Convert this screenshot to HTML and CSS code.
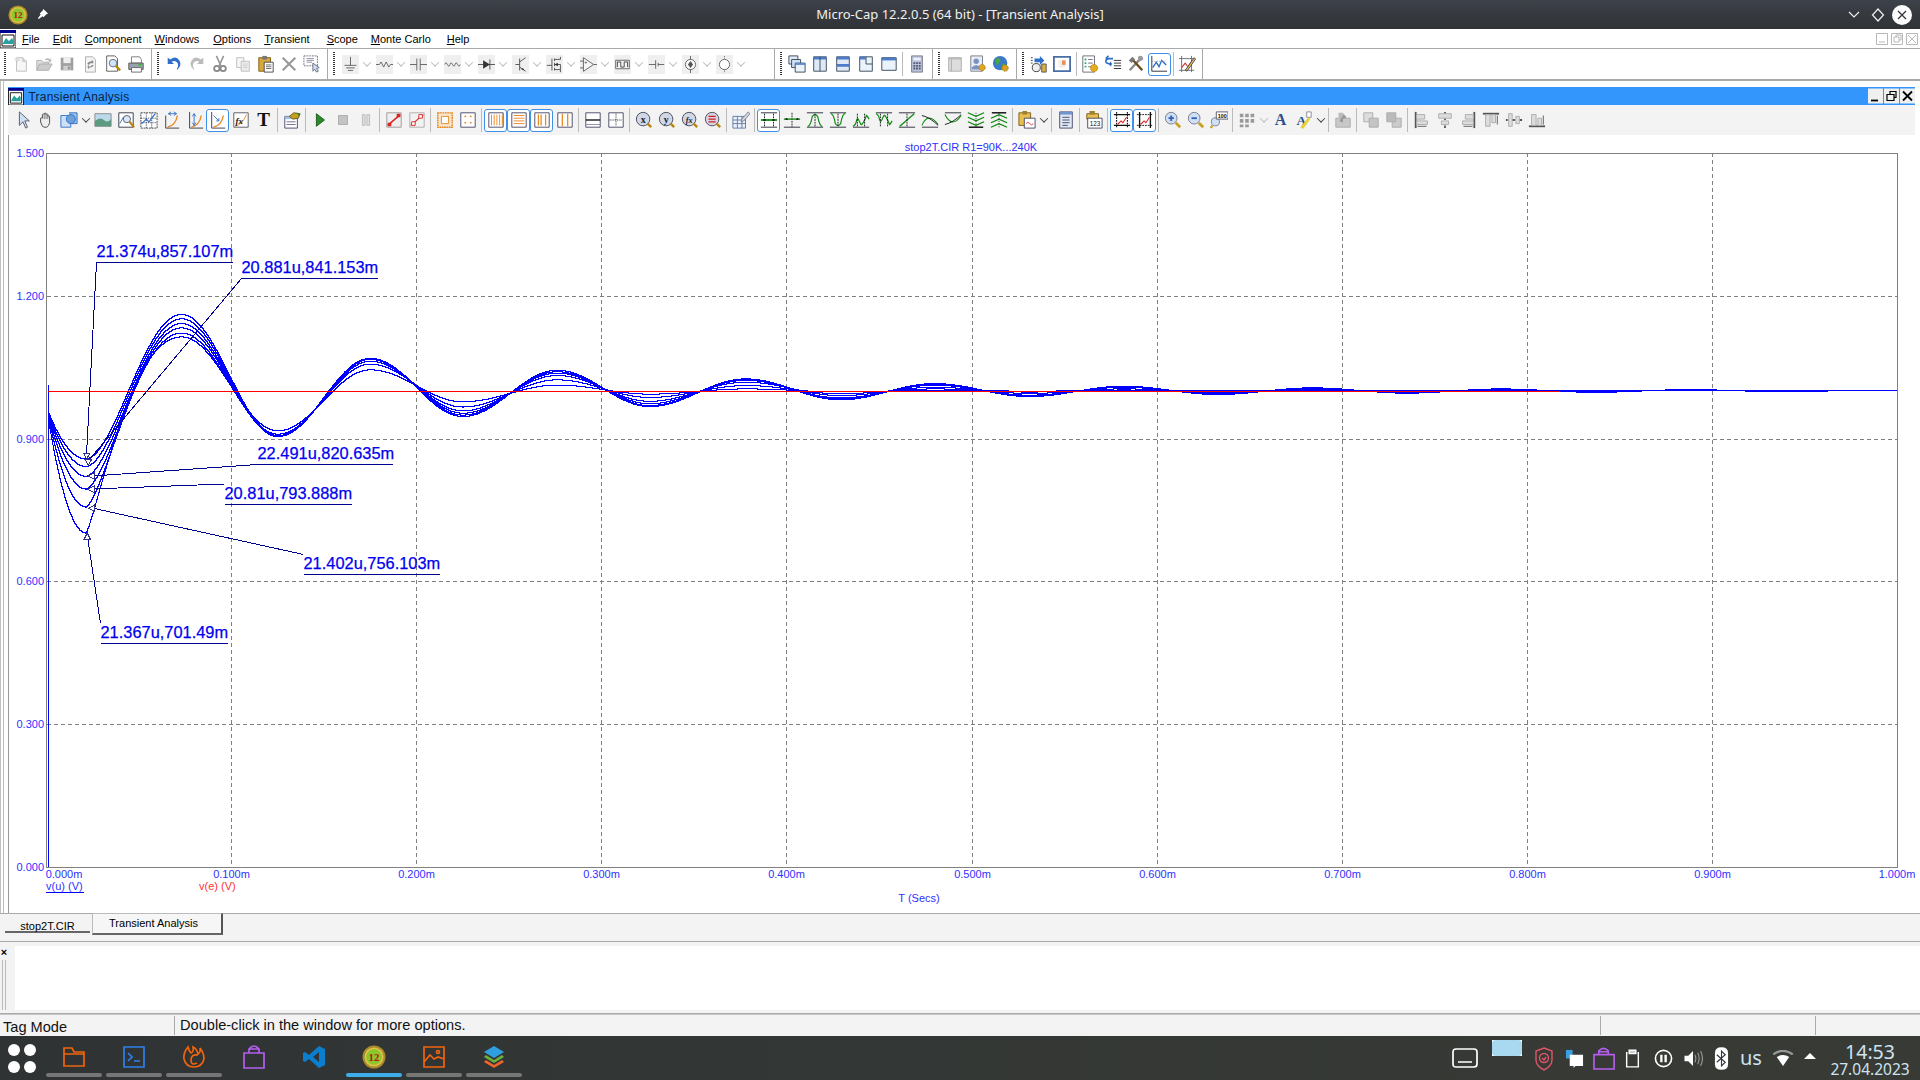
FILE: index.html
```html
<!DOCTYPE html>
<html lang="en">
<head>
<meta charset="utf-8">
<title>Micro-Cap 12.2.0.5 (64 bit) - [Transient Analysis]</title>
<link rel="stylesheet" href="styles.css">
</head>
<body>
<svg class="defs" width="0" height="0">
<defs>
<symbol id="mc" viewBox="0 0 20 20"><circle cx="10" cy="10" r="9.6" fill="#a98a2a"/><circle cx="10" cy="10" r="8" fill="#e0c04a"/><circle cx="10" cy="10" r="6.6" fill="#8cc82c"/><text x="10" y="13.4" class="mct">12</text></symbol>
<symbol id="new" viewBox="0 0 20 20"><path d="M5 3h7l4 4v11H5z" fill="#f6f6f6" stroke="#bbb"/><path d="M12 3v4h4" fill="#ddd" stroke="#bbb"/><path d="M2 3l3 1 1-3 1 3 3-1-2 2 2 2-3-1-1 3-1-3-3 1 2-2z" fill="#ddd"/></symbol>
<symbol id="open" viewBox="0 0 20 20"><path d="M2 17V6h5l2 2h6v2" fill="#ddd" stroke="#aaa"/><path d="M2 17l3-7h14l-4 7z" fill="#ccc" stroke="#aaa"/><path d="M11 5q3-3 6 0l1-2v5h-4l2-1q-2-2-4-1z" fill="#bbb"/></symbol>
<symbol id="save" viewBox="0 0 20 20"><path d="M3 3h14v14H3z" fill="#a0a0a0"/><path d="M6 3h8v6H6z" fill="#efefef"/><path d="M6 12h8v5H6z" fill="#d0d0d0"/><path d="M11 13h2v3h-2z" fill="#888"/></symbol>
<symbol id="rel" viewBox="0 0 20 20"><path d="M5 2h8l3 3v14H5z" fill="#f4f4f4" stroke="#aaa"/><path d="M7 10q1-3 5-3v-2l2 3-2 2V9q-3 0-3 2zM14 11q-1 3-5 3v2l-2-3 2-2v2q3 0 3-2z" fill="#888"/></symbol>
<symbol id="prev" viewBox="0 0 20 20"><path d="M3 1h9l3 3v14H3z" fill="#fff" stroke="#555"/><circle cx="10" cy="9" r="4.2" fill="#cfe6fa" stroke="#667"/><path d="M13 12l5 5" stroke="#b8860b" stroke-width="2.6"/></symbol>
<symbol id="print" viewBox="0 0 20 20"><path d="M5 2h9l2 3v4H5z" fill="#fff" stroke="#777"/><path d="M2 9h16v7H2z" fill="#9aa3ad" stroke="#555"/><path d="M5 14h11v5H5z" fill="#fff" stroke="#666"/><path d="M13 10h3v2h-3z" fill="#2c2"/></symbol>
<symbol id="undo" viewBox="0 0 20 20"><path d="M3 3v7h7L7.500 7.500Q11 5 14 9q1.500 3-1 7h1q5-5 2-10Q12 0 6 5z" fill="#2f6fc8"/></symbol>
<symbol id="redo" viewBox="0 0 20 20"><path d="M17 3v7h-7l2.500-2.500Q9 5 6 9q-1.500 3 1 7H6Q1 11 4 6q4-6 10-1z" fill="#bbb"/></symbol>
<symbol id="cut" viewBox="0 0 20 20"><path d="M6 1l5 11M14 1L9 12" stroke="#999" stroke-width="1.800"/><circle cx="6.500" cy="15" r="3" fill="none" stroke="#888" stroke-width="2"/><circle cx="13.500" cy="15" r="3" fill="none" stroke="#888" stroke-width="2"/></symbol>
<symbol id="copy" viewBox="0 0 20 20"><path d="M3 3h8v11H3z" fill="#f6f6f6" stroke="#bbb"/><path d="M8 7h9v11H8z" fill="#eee" stroke="#bbb"/><path d="M10 10h5M10 12h5M10 14h5" stroke="#ccc"/></symbol>
<symbol id="paste" viewBox="0 0 20 20"><path d="M2 3h13v15H2z" fill="#d8a93a" stroke="#7a5a14"/><path d="M6 1h5v4H6z" fill="#777"/><path d="M8 8h10v11H8z" fill="#fff" stroke="#444"/><path d="M10 11h6M10 13h6M10 15h6" stroke="#666"/></symbol>
<symbol id="del" viewBox="0 0 20 20"><path d="M3 3l14 14M17 3L3 17" stroke="#999" stroke-width="2.400"/></symbol>
<symbol id="sel" viewBox="0 0 20 20"><path d="M1 1h15v11H1z" fill="none" stroke="#667" stroke-dasharray="2 1"/><path d="M4 4h8M4 6h8M4 8h6" stroke="#889"/><path d="M11 9l7 5-3 1 2 3-2 1-2-3-2 2z" fill="#cfe0f4" stroke="#667"/></symbol>
<symbol id="gnd" viewBox="0 0 20 20"><path d="M10 1v10M3 11h14M5 14h10M7 17h6" stroke="#555"/></symbol>
<symbol id="res" viewBox="0 0 20 20"><path d="M0 10h4l2-3 3 6 3-6 3 6 2-3h3" fill="none" stroke="#555"/></symbol>
<symbol id="cap" viewBox="0 0 20 20"><path d="M0 10h8M12 10h8M8 3v14M12 3v14" fill="none" stroke="#555"/></symbol>
<symbol id="ind" viewBox="0 0 20 20"><path d="M1 10q1-4 3 0t3 0 3 0 3 0 3 0 3 0" fill="none" stroke="#555"/></symbol>
<symbol id="dio" viewBox="0 0 20 20"><path d="M0 10h20M14 4v12" stroke="#444"/><path d="M6 5l8 5-8 5z" fill="#333"/></symbol>
<symbol id="bjt" viewBox="0 0 20 20"><path d="M4 10h5M9 3v14M9 7l7-5M9 13l7 5" fill="none" stroke="#444"/><path d="M15 17l-4-1 1.500-2z" fill="#333"/></symbol>
<symbol id="mos" viewBox="0 0 20 20"><path d="M1 11h6M7 3v14M10 3v3M10 8v4M10 14v3M10 4h7V1M10 16h7v3M10 10h7v6M17 10" fill="none" stroke="#444"/><path d="M10 10l4-2v4z" fill="#333"/></symbol>
<symbol id="amp" viewBox="0 0 20 20"><path d="M4 2l12 8-12 8zM0 6h4M0 14h4M16 10h4" fill="#f6f6f6" stroke="#555"/><text x="5" y="9" class="mini">+</text></symbol>
<symbol id="pul" viewBox="0 0 20 20"><path d="M2 5h16v10H2z" fill="#f4f4f4" stroke="#555"/><path d="M4 13V7h4v6h4V7h4v6" fill="none" stroke="#333"/></symbol>
<symbol id="bat" viewBox="0 0 20 20"><path d="M1 10h8M12 10h7M9 5v10M12 8v4" fill="none" stroke="#555"/></symbol>
<symbol id="src" viewBox="0 0 20 20"><circle cx="10" cy="10" r="6" fill="#f8f8f8" stroke="#555"/><path d="M10 0v4M10 16v4" stroke="#555"/><path d="M10 6l3 4h-6zM10 14l3-4h-6z" fill="#555"/></symbol>
<symbol id="src2" viewBox="0 0 20 20"><circle cx="10" cy="10" r="6" fill="#fff" stroke="#555"/><path d="M10 0v4M10 16v4" stroke="#555" stroke-dasharray="1 1"/></symbol>
<symbol id="w1" viewBox="0 0 20 20"><path d="M1 1h10v9H1z" fill="#dfe9f6" stroke="#345"/><path d="M4 5h10v9H4z" fill="#cfe0f6" stroke="#345"/><path d="M8 9h11v10H8z" fill="#eaf2fb" stroke="#345"/><path d="M8 9h11v2H8z" fill="#5a8cd0"/></symbol>
<symbol id="w2" viewBox="0 0 20 20"><path d="M3 2h14v16H3z" fill="#dfe9f6" stroke="#345"/><path d="M3 2h14v3H3z" fill="#4a7cc8"/><path d="M10 2v16" stroke="#345"/></symbol>
<symbol id="w3" viewBox="0 0 20 20"><path d="M3 2h14v16H3z" fill="#dfe9f6" stroke="#345"/><path d="M3 2h14v3H3zM3 10h14v3H3z" fill="#4a7cc8"/></symbol>
<symbol id="w4" viewBox="0 0 20 20"><path d="M3 2h14v16H3z" fill="#eaf2fb" stroke="#345"/><path d="M10 2v8h7" fill="none" stroke="#345"/><path d="M3 2h7v3H3z" fill="#4a7cc8"/></symbol>
<symbol id="w5" viewBox="0 0 20 20"><path d="M2 3h16v14H2z" fill="#eaf2fb" stroke="#345"/><path d="M2 3h16v3H2z" fill="#4a7cc8"/></symbol>
<symbol id="calc" viewBox="0 0 20 20"><path d="M4 1h12v18H4z" fill="#b9c4d8" stroke="#778"/><path d="M6 3h8v3H6z" fill="#eef"/><path d="M6 8h2v2H6zM9 8h2v2H9zM12 8h2v2h-2zM6 11h2v2H6zM9 11h2v2H9zM12 11h2v2h-2zM6 14h2v2H6zM9 14h2v2H9zM12 14h2v2h-2z" fill="#557"/></symbol>
<symbol id="pan" viewBox="0 0 20 20"><path d="M3 3h14v15H3z" fill="#ddd" stroke="#aaa"/><path d="M3 3h14v2H3z" fill="#bbb"/><path d="M6 5v13" stroke="#aaa"/></symbol>
<symbol id="ppl" viewBox="0 0 20 20"><path d="M2 1h13v17H2z" fill="#e8eef5" stroke="#778"/><circle cx="8" cy="7" r="3" fill="#7a93c0"/><path d="M3 14q5-6 10 0v2H3z" fill="#7a93c0"/><circle cx="14.500" cy="14" r="3.500" fill="#e0a820" stroke="#a87808" stroke-dasharray="1.500 1"/></symbol>
<symbol id="glb" viewBox="0 0 20 20"><circle cx="9" cy="9" r="8" fill="#3b79c9"/><path d="M4 4q4-1 5 1t-1 4-3 2zM11 10q4-1 4 1t-2 4z" fill="#4aa83c"/><circle cx="14.500" cy="14.500" r="3.500" fill="#d8a420" stroke="#a87808" stroke-dasharray="1.500 1"/></symbol>
<symbol id="runa" viewBox="0 0 20 20"><path d="M1 3h2M1 6h2M1 9h2" stroke="#333"/><path d="M5 4h6V1l5 5-5 5V8H5z" fill="#2f6fc8"/><circle cx="7" cy="14" r="4.500" fill="#eee" stroke="#333"/><path d="M13 10h5v9h-5z" fill="#d8b040" stroke="#555"/></symbol>
<symbol id="wimg" viewBox="0 0 20 20"><path d="M1 2h18v16H1z" fill="#fff" stroke="#4a6ea8" stroke-width="2"/><path d="M6 6h8v8H6z" fill="#eee"/><path d="M10 6h4v5h-4z" fill="#e8905a"/></symbol>
<symbol id="chk" viewBox="0 0 20 20"><path d="M2 1h13v18H2z" fill="#fff" stroke="#667"/><path d="M4 4h2v2H4zM4 8h2v2H4zM4 12h2v2H4z" fill="#3a7"/><path d="M8 5h5M8 9h5M8 13h3" stroke="#667"/><circle cx="14.500" cy="14.500" r="4" fill="#e6ac20" stroke="#a87808" stroke-dasharray="1.500 1"/></symbol>
<symbol id="lst" viewBox="0 0 20 20"><path d="M11 6h8M11 9h8M11 12h8M11 15h8" stroke="#222"/><path d="M2 7q0-3 4-3h4M5 1L2 4M9 10q-7 0-7-3" fill="none" stroke="#2f6fc8" stroke-width="1.800"/><path d="M8 7l-3 3 3 3z" fill="#2f6fc8"/></symbol>
<symbol id="tool" viewBox="0 0 20 20"><path d="M3 17L15 4" stroke="#8a8a8a" stroke-width="2.600"/><path d="M17 17L6 5" stroke="#6b4a20" stroke-width="2.600"/><path d="M2 6l4-4 3 3-4 4z" fill="#777"/><path d="M13 1q5-1 5 4l-3 2-3-3z" fill="#9a9a9a"/></symbol>
<symbol id="cht" viewBox="0 0 20 20"><path d="M2 1v17h17" fill="none" stroke="#223"/><path d="M3 14l4-6 3 5 3-7 5 5" fill="none" stroke="#2f6fc8" stroke-width="1.500"/><path d="M2 7h16" stroke="#999" stroke-dasharray="1 1"/></symbol>
<symbol id="chp" viewBox="0 0 20 20"><path d="M1 4h17M1 17h17M4 1v18M15 1v18" stroke="#667"/><path d="M4 14l4-5 3 4 5-7" fill="none" stroke="#c33" stroke-width="1.200"/><path d="M8 17L18 3l1.500 1.500L10 18z" fill="#e8c040" stroke="#446"/></symbol>
<symbol id="arw" viewBox="0 0 20 20"><path d="M6 1v15l4-4 3 7 2-1-3-7h5z" fill="#cfe0f4" stroke="#556"/></symbol>
<symbol id="hand" viewBox="0 0 20 20"><path d="M6 17Q3 12 4 8q1-1 2 0V4q1-2 2 0V3q1-2 2 0v1q1-2 2 0v2q1-1 2 0v7q-1 4-3 5H8z" fill="#eee" stroke="#444"/><path d="M8 4v5M10 3v6M12 4v5" stroke="#777"/></symbol>
<symbol id="sh" viewBox="0 0 20 20"><path d="M1 5h11v13H1z" fill="#cfe0f4" stroke="#2f6fc8"/><path d="M10 2h9v12h-6" fill="#9cc0e8" stroke="#2f6fc8"/><circle cx="12" cy="9" r="5" fill="#6f9fd8" stroke="#2f6fc8"/></symbol>
<symbol id="img" viewBox="0 0 20 20"><path d="M1 3h18v14H1z" fill="#bcd8ea" stroke="#888"/><path d="M1 11q6-5 10-1t8-1v8H1z" fill="#5c9a82"/></symbol>
<symbol id="zg" viewBox="0 0 20 20"><path d="M2 2h16v16H2z" fill="#fff" stroke="#334"/><path d="M3 14l4-7 3 5" fill="none" stroke="#2f6fc8"/><circle cx="11" cy="9" r="4" fill="#dbe8f6" stroke="#556"/><path d="M14 12l5 6" stroke="#b8860b" stroke-width="2.400"/></symbol>
<symbol id="gg" viewBox="0 0 20 20"><path d="M1 2h18v17H1z" fill="#fff" stroke="#333" stroke-dasharray="2 1"/><path d="M1 8h18M1 13h18M7 2v17M13 2v17" stroke="#334" stroke-dasharray="1 1"/><path d="M2 14l5-5 3 3 7-9" fill="none" stroke="#2f6fc8" stroke-width="1.300"/></symbol>
<symbol id="o1" viewBox="0 0 20 20"><path d="M3 5v14h15" fill="none" stroke="#334"/><path d="M5 18q9-2 11-13" fill="none" stroke="#e8851c" stroke-width="1.500"/><path d="M6 3h9M6 3l3-2M6 3l3 2M15 3l-3-2M15 3l-3 2" stroke="#2f6fc8" fill="none"/></symbol>
<symbol id="o2" viewBox="0 0 20 20"><path d="M4 1v18h15" fill="none" stroke="#334"/><path d="M6 18q9-2 11-13" fill="none" stroke="#e8851c" stroke-width="1.500"/><path d="M9 3v13M9 3L7 6M9 3l2 3M9 16l-2-3M9 16l2-3" stroke="#2f6fc8" fill="none"/></symbol>
<symbol id="o3" viewBox="0 0 20 20"><path d="M3 1v18h15" fill="none" stroke="#334"/><path d="M5 18q9-2 11-13" fill="none" stroke="#e8851c" stroke-width="1.500"/><path d="M5 5l6 6M8 11h3V8" stroke="#2f6fc8" fill="none"/></symbol>
<symbol id="fx" viewBox="0 0 20 20"><path d="M2 2h16v16H2z" fill="#fff" stroke="#556"/><path d="M3 17q9-2 13-13" fill="none" stroke="#e8851c"/><text x="4" y="14" class="fxt">fx</text></symbol>
<symbol id="prop" viewBox="0 0 20 20"><path d="M2 6h14v13H2z" fill="#fff" stroke="#446"/><path d="M2 6h14v3H2z" fill="#9cc0e8"/><path d="M4 12h10M4 15h10" stroke="#668"/><path d="M7 6l5-4 7 1-2 5-6 1z" fill="#c8a020" stroke="#6a5a10"/><path d="M15 2l4 1-1 3z" fill="#2a8a3a"/></symbol>
<symbol id="play" viewBox="0 0 20 20"><path d="M6 3l9 7-9 7z" fill="#2a8a2a" stroke="#1a5a1a"/></symbol>
<symbol id="stp" viewBox="0 0 20 20"><path d="M5 5h10v10H5z" fill="#c4c4c4" stroke="#aaa"/></symbol>
<symbol id="pau" viewBox="0 0 20 20"><path d="M6 4h3v12H6zM11 4h3v12h-3z" fill="#ddd" stroke="#bbb"/></symbol>
<symbol id="r1" viewBox="0 0 20 20"><path d="M2 2h16v16H2z" fill="#eee" stroke="#999"/><path d="M3 16L17 4" stroke="#d22" stroke-width="1.600"/><path d="M3 13h4v4H3zM13 3h4v4h-4z" fill="#d22"/></symbol>
<symbol id="r2" viewBox="0 0 20 20"><path d="M2 2h16v16H2z" fill="#f2f2f2" stroke="#aaa"/><path d="M3 16L17 4" stroke="#d22" stroke-width="1.300"/><path d="M4 12h4v4H4zM12 4h4v4h-4z" fill="#fff" stroke="#d22"/></symbol>
<symbol id="osq" viewBox="0 0 20 20"><path d="M2 2h16v16H2z" fill="#f8e8d0" stroke="#e8851c" stroke-width="1.500" stroke-dasharray="2 .6"/><path d="M6 6h8v8H6z" fill="#fff" stroke="#e8851c"/></symbol>
<symbol id="dgd" viewBox="0 0 20 20"><path d="M2 2h16v16H2z" fill="#fff" stroke="#446"/><path d="M6 6h2M12 6h2M6 13h2M12 13h2M7 5v2M13 5v2M7 12v2M13 12v2" stroke="#e8851c"/></symbol>
<symbol id="l1" viewBox="0 0 20 20"><path d="M2 2h16v16H2z" fill="#fff" stroke="#446"/><path d="M5 4v12M8 4v12M11 4v12M14 4v12M17 4v12" stroke="#e8851c"/></symbol>
<symbol id="l2" viewBox="0 0 20 20"><path d="M2 2h16v16H2z" fill="#fff" stroke="#446"/><path d="M4 5h12M4 8h12M4 11h12M4 14h12" stroke="#e8851c"/></symbol>
<symbol id="l3" viewBox="0 0 20 20"><path d="M2 2h16v16H2z" fill="#fff" stroke="#446"/><path d="M6 4v12M9 4v12M14 4v12" stroke="#e8851c" stroke-width="1.400"/></symbol>
<symbol id="l4" viewBox="0 0 20 20"><path d="M2 2h16v16H2z" fill="#fff" stroke="#446"/><path d="M7 3v14M13 3v14" stroke="#e8851c" stroke-width="1.400"/></symbol>
<symbol id="hl" viewBox="0 0 20 20"><path d="M2 2h16v16H2z" fill="#fff" stroke="#446"/><path d="M2 10h16" stroke="#111" stroke-width="1.500"/><path d="M2 15h16" stroke="#88a"/></symbol>
<symbol id="cr" viewBox="0 0 20 20"><path d="M2 2h16v16H2z" fill="#fff" stroke="#446"/><path d="M10 3v14M3 10h14" stroke="#111" stroke-dasharray="1 1"/></symbol>
<symbol id="zx" viewBox="0 0 20 20"><circle cx="9" cy="9" r="7.500" fill="#cfd8e4" stroke="#445"/><text x="9" y="13" class="zt">x</text><path d="M14 14l4 4" stroke="#b8860b" stroke-width="2.600"/></symbol>
<symbol id="zy" viewBox="0 0 20 20"><circle cx="9" cy="9" r="7.500" fill="#cfd8e4" stroke="#445"/><text x="9" y="13" class="zt">y</text><path d="M14 14l4 4" stroke="#b8860b" stroke-width="2.600"/></symbol>
<symbol id="zf" viewBox="0 0 20 20"><circle cx="9" cy="9" r="7.500" fill="#cfd8e4" stroke="#445"/><text x="9" y="13" class="zts">fx</text><path d="M14 14l4 4" stroke="#b8860b" stroke-width="2.600"/></symbol>
<symbol id="zl" viewBox="0 0 20 20"><circle cx="9" cy="9" r="7.500" fill="#d9d4e4" stroke="#445"/><path d="M5 6h8M5 9h8M5 12h8" stroke="#c22" stroke-width="1.500"/><path d="M14 14l4 4" stroke="#b8860b" stroke-width="2.600"/></symbol>
<symbol id="tbp" viewBox="0 0 20 20"><path d="M1 6h14v13H1z" fill="#eef3fa" stroke="#5a78a8"/><path d="M1 10h14M1 14h14M6 6v13M11 6v13" stroke="#5a78a8"/><path d="M11 9l7-8 2 2-7 8-3 1z" fill="#d8dde4" stroke="#778"/></symbol>
<symbol id="c1" viewBox="0 0 20 20"><path d="M1 2h18M1 18h18" stroke="#223"/><path d="M5 3v14M15 3v14" stroke="#111" stroke-dasharray="2 1"/><path d="M1 10h18" stroke="#0a8a0a" stroke-width="2"/><path d="M4 9h2v2H4zM14 9h2v2h-2z" fill="#111"/></symbol>
<symbol id="c2" viewBox="0 0 20 20"><path d="M10 2v16" stroke="#111" stroke-dasharray="2 1"/><path d="M1 9h18" stroke="#0a8a0a" stroke-width="1.500"/><path d="M3 8h2v2H3zM15 8h2v2h-2z" fill="#111"/><path d="M1 18h18" stroke="#223"/></symbol>
<symbol id="c3" viewBox="0 0 20 20"><path d="M1 2h18M1 18h18" stroke="#223"/><path d="M2 17q3 0 5-11 3-4 6 0 2 11 5 11" fill="none" stroke="#0a8a0a" stroke-width="1.300"/><path d="M10 3v14" stroke="#111" stroke-dasharray="2 1"/></symbol>
<symbol id="c4" viewBox="0 0 20 20"><path d="M1 2h18M1 18h18" stroke="#223"/><path d="M2 3q3 0 5 11 3 4 6 0 2-11 5-11" fill="none" stroke="#0a8a0a" stroke-width="1.300"/><path d="M10 3v14" stroke="#111" stroke-dasharray="2 1"/></symbol>
<symbol id="c5" viewBox="0 0 20 20"><path d="M1 18h18" stroke="#223"/><path d="M1 17q3-1 4-6t3 0 3 4 3-5 2-5 3 4" fill="none" stroke="#0a8a0a" stroke-width="1.300"/><path d="M6 3v14M14 3v14" stroke="#111" stroke-dasharray="2 1"/></symbol>
<symbol id="c6" viewBox="0 0 20 20"><path d="M1 2h18" stroke="#223"/><path d="M1 3q3 1 4 6t3 0 3-4 3 5 2 5 3-4" fill="none" stroke="#0a8a0a" stroke-width="1.300"/><path d="M6 3v14M14 3v14" stroke="#111" stroke-dasharray="2 1"/></symbol>
<symbol id="c7" viewBox="0 0 20 20"><path d="M1 2h18M1 18h18" stroke="#223"/><path d="M2 17L18 3" stroke="#0a8a0a" stroke-width="1.400"/><path d="M10 3v14" stroke="#111" stroke-dasharray="2 1"/></symbol>
<symbol id="c8" viewBox="0 0 20 20"><path d="M1 18h18" stroke="#223"/><path d="M1 16Q8 0 19 15" fill="none" stroke="#0a8a0a" stroke-width="1.200"/><path d="M1 5q9 2 18 11" fill="none" stroke="#111"/></symbol>
<symbol id="c9" viewBox="0 0 20 20"><path d="M1 2h18" stroke="#223"/><path d="M1 4q8 16 18 1" fill="none" stroke="#0a8a0a" stroke-width="1.200"/><path d="M1 15q9-2 18-11" fill="none" stroke="#111"/></symbol>
<symbol id="c10" viewBox="0 0 20 20"><path d="M1 2l9 4 9-4M1 7l9 4 9-4M1 12l9 4 9-4" fill="none" stroke="#0a8a0a" stroke-width="1.300"/><path d="M2 18h16" stroke="#111" stroke-width="1.600"/><path d="M10 2v16" stroke="#111" stroke-dasharray="1 2"/></symbol>
<symbol id="c11" viewBox="0 0 20 20"><path d="M1 8l9-4 9 4M1 13l9-4 9 4M1 18l9-4 9 4" fill="none" stroke="#0a8a0a" stroke-width="1.300"/><path d="M2 2h16" stroke="#111" stroke-width="1.600"/><path d="M10 2v16" stroke="#111" stroke-dasharray="1 2"/></symbol>
<symbol id="pst" viewBox="0 0 20 20"><path d="M1 2h13v14H1z" fill="#e8c050" stroke="#7a5a14"/><path d="M5 0h5v4H5z" fill="#a08030"/><path d="M7 8h12v11H7z" fill="#fff" stroke="#446"/><path d="M9 14q2-3 4 0t4 0" fill="none" stroke="#c33"/></symbol>
<symbol id="doc" viewBox="0 0 20 20"><path d="M3 1h14v18H3z" fill="#dfe8f4" stroke="#446"/><path d="M3 1h14v3H3z" fill="#6f95cc"/><path d="M6 7h8M6 10h8M6 13h8M6 16h6" stroke="#446"/></symbol>
<symbol id="cal" viewBox="0 0 20 20"><path d="M2 3h13v6H2z" fill="#e8c050" stroke="#7a5a14"/><path d="M5 0h6v4H5z" fill="#a08030"/><path d="M3 8h16v11H3z" fill="#fff" stroke="#446"/><text x="11" y="17" class="num">123</text></symbol>
<symbol id="fa" viewBox="0 0 20 20"><path d="M1 4h18M1 16h18" stroke="#111" stroke-width="1.500"/><path d="M4 1v18M16 1v18" stroke="#111" stroke-width="1.200" stroke-dasharray="2 1"/><path d="M5 15l4-4 2 2 4-6" fill="none" stroke="#d22" stroke-width="1.200"/></symbol>
<symbol id="fb" viewBox="0 0 20 20"><path d="M4 1v18M16 1v18" stroke="#111" stroke-width="1.500"/><path d="M1 4h18M1 16h18" stroke="#111" stroke-width="1" stroke-dasharray="2 1"/><path d="M5 15l4-4 2 2 4-6" fill="none" stroke="#d22" stroke-width="1.200"/></symbol>
<symbol id="zi" viewBox="0 0 20 20"><circle cx="8" cy="8" r="6.500" fill="#cfe0f4" stroke="#778"/><path d="M5 8h6M8 5v6" stroke="#2f5fb8" stroke-width="2"/><path d="M13 13l5 5" stroke="#c8a020" stroke-width="3"/></symbol>
<symbol id="zo" viewBox="0 0 20 20"><circle cx="8" cy="8" r="6.500" fill="#cfe0f4" stroke="#778"/><path d="M5 8h6" stroke="#2f5fb8" stroke-width="2"/><path d="M13 13l5 5" stroke="#c8a020" stroke-width="3"/></symbol>
<symbol id="z100" viewBox="0 0 20 20"><circle cx="6" cy="12" r="4.500" fill="#cfe0f4" stroke="#778"/><path d="M2.500 16L1 19" stroke="#c8a020" stroke-width="2.400"/><path d="M7 1h13v8H7z" fill="#fff" stroke="#556"/><text x="13.500" y="7.500" class="tiny">100</text></symbol>
<symbol id="tile" viewBox="0 0 20 20"><path d="M2 3h4v4H2zM8 3h4v4H8zM14 3h4v4h-4zM2 9h4v4H2zM8 9h4v4H8zM14 9h4v4h-4zM2 15h4v3H2zM8 15h4v3H8z" fill="#9a9a9a"/></symbol>
<symbol id="ap" viewBox="0 0 20 20"><text x="7" y="15" class="ab">A</text><path d="M13 1h5v6h-5z" fill="#fff" stroke="#889"/><path d="M6 18l9-11 2 2-8 11z" fill="#e8d030"/></symbol>
<symbol id="bx" viewBox="0 0 20 20"><path d="M2 8h16v10H2z" fill="#c8c8c8" stroke="#aaa"/><path d="M5 2h5l4 6H5z" fill="#bbb"/><path d="M6 11l5-7 3 3-4 2v4z" fill="#999"/></symbol>
<symbol id="fw" viewBox="0 0 20 20"><path d="M2 2h10v10H2z" fill="#ddd" stroke="#aaa"/><path d="M8 8h10v10H8z" fill="#c4c4c4" stroke="#aaa"/></symbol>
<symbol id="bw" viewBox="0 0 20 20"><path d="M8 8h10v10H8z" fill="#ccc" stroke="#aaa"/><path d="M2 2h10v10H2z" fill="#bbb" stroke="#aaa"/></symbol>
<symbol id="a1" viewBox="0 0 20 20"><path d="M3 1v18" stroke="#555" stroke-width="2"/><path d="M4 4h9v5H4zM4 11h12v4H4z" fill="#ddd" stroke="#aaa"/><path d="M5 17h10" stroke="#555"/></symbol>
<symbol id="a2" viewBox="0 0 20 20"><path d="M10 1v2M10 8v2M10 16v3" stroke="#555" stroke-width="2"/><path d="M3 3h14v5H3zM6 11h8v4H6z" fill="#ddd" stroke="#aaa"/></symbol>
<symbol id="a3" viewBox="0 0 20 20"><path d="M17 1v18" stroke="#555" stroke-width="2"/><path d="M7 4h9v5H7zM4 11h12v4H4z" fill="#ddd" stroke="#aaa"/><path d="M5 17h10" stroke="#555"/></symbol>
<symbol id="a4" viewBox="0 0 20 20"><path d="M1 3h18" stroke="#555" stroke-width="2"/><path d="M4 4h5v13H4zM11 4h4v9h-4z" fill="#ddd" stroke="#aaa"/><path d="M17 5v10" stroke="#555"/></symbol>
<symbol id="a5" viewBox="0 0 20 20"><path d="M1 10h2M8 10h3M16 10h3" stroke="#555" stroke-width="2"/><path d="M4 3h4v14H4zM12 6h4v8h-4z" fill="#ddd" stroke="#aaa"/></symbol>
<symbol id="a6" viewBox="0 0 20 20"><path d="M1 17h18" stroke="#555" stroke-width="2"/><path d="M4 4h5v12H4zM11 8h4v8h-4z" fill="#ddd" stroke="#aaa"/><path d="M17 5v10" stroke="#555"/></symbol>
</defs>
</svg>
<div class="app">
<header class="titlebar">
<div class="tb-left"><svg class="logo"><use href="#mc"/></svg><svg class="pin" viewBox="0 0 12 12"><path class="pinp" d="M7 0l5 5-2 1-3 3-1-1-4 3-1-1 3-4-1-1 3-3z"/></svg></div>
<div class="tb-title">Micro-Cap 12.2.0.5 (64 bit) - [Transient Analysis]</div>
<div class="tb-right"><svg class="wc" viewBox="0 0 14 14"><path class="wcl" d="M2 4l5 5 5-5"/></svg><svg class="wc" viewBox="0 0 14 14"><path class="wcl" d="M7 1l5.500 6L7 13 1.500 7z"/></svg><span class="closeb"><svg class="wcx" viewBox="0 0 12 12"><path class="wcd" d="M2 2l8 8M10 2l-8 8"/></svg></span></div>
</header>
<nav class="menubar">
<svg class="micon" viewBox="0 0 16 18"><path class="mi1" d="M0 0h16v18H0z"/><path class="mi2" d="M0 0h16v3H0z"/><path class="mi3" d="M2 5h12v11H2z"/><path class="mi4" d="M3 13l3-5 3 3 3-3 1 2v4H3z"/></svg>
<div class="menus"><span><u>F</u>ile</span><span><u>E</u>dit</span><span><u>C</u>omponent</span><span><u>W</u>indows</span><span><u>O</u>ptions</span><span><u>T</u>ransient</span><span><u>S</u>cope</span><span><u>M</u>onte Carlo</span><span><u>H</u>elp</span></div>
<div class="mdi-btns"><svg class="mb" viewBox="0 0 12 12"><path d="M0.500 .5h11v11H.5z"/><path d="M3 9h6"/></svg><svg class="mb" viewBox="0 0 12 12"><path d="M0.500 .5h11v11H.5z"/><path d="M3 4h5v5H3zM5 4V2h5v5H8"/></svg><svg class="mb" viewBox="0 0 12 12"><path d="M0.500 .5h11v11H.5z"/><path d="M2 2l8 8M10 2l-8 8"/></svg></div>
</nav>
<div class="toolbar">
<div class="grp g1"><i class="grip"></i>
<span class="b"><svg class="i"><use href="#new"/></svg></span><span class="b"><svg class="i"><use href="#open"/></svg></span><span class="b"><svg class="i"><use href="#save"/></svg></span><span class="b"><svg class="i"><use href="#rel"/></svg></span><span class="b"><svg class="i"><use href="#prev"/></svg></span><span class="b"><svg class="i"><use href="#print"/></svg></span></div>
<div class="grp"><i class="grip"></i>
<span class="b"><svg class="i"><use href="#undo"/></svg></span><span class="b"><svg class="i"><use href="#redo"/></svg></span><span class="b"><svg class="i"><use href="#cut"/></svg></span><span class="b"><svg class="i"><use href="#copy"/></svg></span><span class="b"><svg class="i"><use href="#paste"/></svg></span><span class="b"><svg class="i"><use href="#del"/></svg></span><span class="b"><svg class="i"><use href="#sel"/></svg></span></div>
<div class="grp comp"><i class="grip"></i>
<span class="b"><svg class="i c"><use href="#gnd"/></svg></span><i class="ch lt"></i><span class="b"><svg class="i c"><use href="#res"/></svg></span><i class="ch lt"></i><span class="b"><svg class="i c"><use href="#cap"/></svg></span><i class="ch lt"></i><span class="b"><svg class="i c"><use href="#ind"/></svg></span><i class="ch lt"></i><span class="b"><svg class="i c"><use href="#dio"/></svg></span><i class="ch lt"></i><span class="b"><svg class="i c"><use href="#bjt"/></svg></span><i class="ch lt"></i><span class="b"><svg class="i c"><use href="#mos"/></svg></span><i class="ch lt"></i><span class="b"><svg class="i c"><use href="#amp"/></svg></span><i class="ch lt"></i><span class="b"><svg class="i c"><use href="#pul"/></svg></span><i class="ch lt"></i><span class="b"><svg class="i c"><use href="#bat"/></svg></span><i class="ch lt"></i><span class="b"><svg class="i c"><use href="#src"/></svg></span><i class="ch lt"></i><span class="b"><svg class="i c"><use href="#src2"/></svg></span><i class="ch lt"></i></div>
<div class="grp"><i class="grip"></i>
<span class="b"><svg class="i"><use href="#w1"/></svg></span><span class="b"><svg class="i"><use href="#w2"/></svg></span><span class="b"><svg class="i"><use href="#w3"/></svg></span><span class="b"><svg class="i"><use href="#w4"/></svg></span><span class="b"><svg class="i"><use href="#w5"/></svg></span><i class="sp"></i><span class="b"><svg class="i"><use href="#calc"/></svg></span></div>
<div class="grp"><i class="grip"></i>
<span class="b"><svg class="i"><use href="#pan"/></svg></span><span class="b"><svg class="i"><use href="#ppl"/></svg></span><span class="b"><svg class="i"><use href="#glb"/></svg></span></div>
<div class="grp"><i class="grip"></i>
<span class="b"><svg class="i"><use href="#runa"/></svg></span><span class="b"><svg class="i"><use href="#wimg"/></svg></span><i class="sp"></i><span class="b"><svg class="i"><use href="#chk"/></svg></span><span class="b"><svg class="i"><use href="#lst"/></svg></span><span class="b"><svg class="i"><use href="#tool"/></svg></span><span class="b on"><svg class="i"><use href="#cht"/></svg></span><i class="sp"></i><span class="b"><svg class="i"><use href="#chp"/></svg></span></div>
</div>
<main class="mdi">
<section class="child">
<div class="child-title">
<svg class="ci" viewBox="0 0 16 18"><path class="mi1" d="M0 0h16v18H0z"/><path class="mi2" d="M0 0h16v3H0z"/><path class="mi3" d="M2 5h12v11H2z"/><path class="mi4" d="M3 13l3-5 3 3 3-3 1 2v4H3z"/></svg>
<span class="ct">Transient Analysis</span>
<div class="cbtns"><svg class="cb" viewBox="0 0 15 15"><path class="cbg" d="M0 0h15v15H0z"/><path class="cbl" d="M3 12h7"/></svg><svg class="cb" viewBox="0 0 15 15"><path class="cbg" d="M0 0h15v15H0z"/><path class="cbt" d="M3 6h7v6H3zM6 6V3h6v6h-2"/></svg><svg class="cb" viewBox="0 0 15 15"><path class="cbg" d="M0 0h15v15H0z"/><path class="cbl" d="M3 3l9 9M12 3l-9 9"/></svg></div>
</div>
<div class="child-tools">
<span class="b"><svg class="i"><use href="#arw"/></svg></span><span class="b"><svg class="i"><use href="#hand"/></svg></span><span class="b"><svg class="i"><use href="#sh"/></svg></span><i class="ch"></i><span class="b"><svg class="i"><use href="#img"/></svg></span><span class="b"><svg class="i"><use href="#zg"/></svg></span><span class="b"><svg class="i"><use href="#gg"/></svg></span><span class="b"><svg class="i"><use href="#o1"/></svg></span><span class="b"><svg class="i"><use href="#o2"/></svg></span><span class="b on"><svg class="i"><use href="#o3"/></svg></span><span class="b"><svg class="i"><use href="#fx"/></svg></span><span class="b bigt">T</span><i class="s2"></i>
<span class="b"><svg class="i"><use href="#prop"/></svg></span><i class="s2"></i>
<span class="b"><svg class="i"><use href="#play"/></svg></span><span class="b"><svg class="i"><use href="#stp"/></svg></span><span class="b"><svg class="i"><use href="#pau"/></svg></span><i class="s2"></i>
<span class="b"><svg class="i"><use href="#r1"/></svg></span><span class="b"><svg class="i"><use href="#r2"/></svg></span><i class="s2"></i>
<span class="b"><svg class="i"><use href="#osq"/></svg></span><span class="b"><svg class="i"><use href="#dgd"/></svg></span><i class="s2"></i>
<span class="b on"><svg class="i"><use href="#l1"/></svg></span><span class="b on"><svg class="i"><use href="#l2"/></svg></span><span class="b on"><svg class="i"><use href="#l3"/></svg></span><span class="b"><svg class="i"><use href="#l4"/></svg></span><i class="s2"></i>
<span class="b"><svg class="i"><use href="#hl"/></svg></span><span class="b"><svg class="i"><use href="#cr"/></svg></span><i class="s2"></i>
<span class="b"><svg class="i"><use href="#zx"/></svg></span><span class="b"><svg class="i"><use href="#zy"/></svg></span><span class="b"><svg class="i"><use href="#zf"/></svg></span><span class="b"><svg class="i"><use href="#zl"/></svg></span><i class="s2"></i>
<span class="b"><svg class="i"><use href="#tbp"/></svg></span><i class="s2"></i>
<span class="b on"><svg class="i"><use href="#c1"/></svg></span><span class="b"><svg class="i"><use href="#c2"/></svg></span><span class="b"><svg class="i"><use href="#c3"/></svg></span><span class="b"><svg class="i"><use href="#c4"/></svg></span><span class="b"><svg class="i"><use href="#c5"/></svg></span><span class="b"><svg class="i"><use href="#c6"/></svg></span><span class="b"><svg class="i"><use href="#c7"/></svg></span><span class="b"><svg class="i"><use href="#c8"/></svg></span><span class="b"><svg class="i"><use href="#c9"/></svg></span><span class="b"><svg class="i"><use href="#c10"/></svg></span><span class="b"><svg class="i"><use href="#c11"/></svg></span><i class="s2"></i>
<span class="b"><svg class="i"><use href="#pst"/></svg></span><i class="ch"></i><i class="s2"></i>
<span class="b"><svg class="i"><use href="#doc"/></svg></span><i class="s2"></i>
<span class="b"><svg class="i"><use href="#cal"/></svg></span><i class="s2"></i>
<span class="b on"><svg class="i"><use href="#fa"/></svg></span><span class="b on"><svg class="i"><use href="#fb"/></svg></span><i class="s2"></i>
<span class="b"><svg class="i"><use href="#zi"/></svg></span><span class="b"><svg class="i"><use href="#zo"/></svg></span><span class="b"><svg class="i"><use href="#z100"/></svg></span><i class="s2"></i>
<span class="b"><svg class="i"><use href="#tile"/></svg></span><i class="ch lt"></i><span class="b biga">A</span><span class="b"><svg class="i"><use href="#ap"/></svg></span><i class="ch"></i><i class="s2"></i>
<span class="b"><svg class="i"><use href="#bx"/></svg></span><i class="s2"></i>
<span class="b"><svg class="i"><use href="#fw"/></svg></span><span class="b"><svg class="i"><use href="#bw"/></svg></span><i class="s2"></i>
<span class="b"><svg class="i"><use href="#a1"/></svg></span><span class="b"><svg class="i"><use href="#a2"/></svg></span><span class="b"><svg class="i"><use href="#a3"/></svg></span><span class="b"><svg class="i"><use href="#a4"/></svg></span><span class="b"><svg class="i"><use href="#a5"/></svg></span><span class="b"><svg class="i"><use href="#a6"/></svg></span>
</div>
<svg class="plot" id="plot" viewBox="8 135 1907 778" width="1907" height="778">
<path class="edge" d="M8.500 135V913"/>
<path class="grid" d="M231.500 153V867M416.500 153V867M601.500 153V867M786.500 153V867M972.500 153V867M1157.500 153V867M1342.500 153V867M1527.500 153V867M1712.500 153V867"/>
<path class="grid" d="M47 296.500H1897M47 439.500H1897M47 581.500H1897M47 724.500H1897"/>
<path class="frame" d="M46.500 153.500H1897.500V867.500H46.500z"/>
<path class="blue" d="M48.500 867V385"/>
<g id="curves"></g>
<path class="red" d="M48 391.500H1560"/>
<g class="tick-y"><text x="44" y="157">1.500</text><text x="44" y="300">1.200</text><text x="44" y="443">0.900</text><text x="44" y="585">0.600</text><text x="44" y="728">0.300</text><text x="44" y="871">0.000</text></g>
<g class="tick-x"><text x="64" y="878">0.000m</text><text x="231.500" y="878">0.100m</text><text x="416.500" y="878">0.200m</text><text x="601.500" y="878">0.300m</text><text x="786.500" y="878">0.400m</text><text x="972.500" y="878">0.500m</text><text x="1157.500" y="878">0.600m</text><text x="1342.500" y="878">0.700m</text><text x="1527.500" y="878">0.800m</text><text x="1712.500" y="878">0.900m</text><text x="1897" y="878">1.000m</text></g>
<text class="leg-b" x="46" y="890">v(u) (V)</text><path class="lgu" d="M46 892.500H84"/>
<text class="leg-r" x="199" y="890">v(e) (V)</text>
<text class="tick-t" x="919" y="902">T (Secs)</text>
<text class="tick-t" x="971" y="151">stop2T.CIR R1=90K...240K</text>
<g class="tags">
<path d="M232.700 262.500H96.500L86.500 455"/><path d="M377.700 278.500H241.500L89 460"/><path d="M393 464.500H257.500L93 476"/><path d="M224.500 484L91 489"/><path d="M351.700 504.500H224.500"/><path d="M303.500 554.500L92 508"/><path d="M439.700 574.500H303.500"/><path d="M100.500 623.500L87.500 537"/><path d="M227.700 643.500H100.500"/>
<path class="mk" d="M83.500 453h6.500l-3.300 6zM85 459.500h6.500l-3.200 6z"/><path class="mk" d="M94.500 472.500v7l-6-3.500zM94 486v6.500l-6-3.200zM94.500 505v6.500l-6-3.200z"/><path class="mk" d="M84 539.500h6.500l-3.200-6.500z"/>
</g>
<g class="tagt"><text x="96.500" y="257">21.374u,857.107m</text><text x="241.500" y="273">20.881u,841.153m</text><text x="257.500" y="459">22.491u,820.635m</text><text x="224.500" y="499">20.81u,793.888m</text><text x="303.500" y="569">21.402u,756.103m</text><text x="100.500" y="638">21.367u,701.49m</text></g>
</svg>
</section>
</main>
<div class="tabs"><span class="tab">stop2T.CIR</span><span class="tab act">Transient Analysis</span></div>
<div class="output"><div class="ohandle"><span class="ox">×</span><i class="obar"></i></div><div class="obox"></div></div>
<div class="status"><span class="st1">Tag Mode</span><span class="st2">Double-click in the window for more options.</span><span class="st3"></span><span class="st4"></span></div>
<footer class="taskbar">
<svg class="start" viewBox="0 0 32 32"><circle cx="7" cy="7" r="6"/><circle cx="23" cy="7" r="6"/><circle cx="7" cy="25" r="6" transform="translate(0 -1)"/><circle cx="23" cy="25" r="6" transform="translate(0 -1)"/></svg>
<div class="tasks">
<div class="task"><svg class="ti" viewBox="0 0 24 24"><path class="st-o" d="M2 21V3h8l2 4h10v14zM2 9h20"/></svg></div>
<div class="task"><svg class="ti" viewBox="0 0 24 24"><path class="st-b" d="M2 2h20v20H2z"/><path class="st-b" d="M6 8l4 4-4 4M12 16h6"/></svg></div>
<div class="task"><svg class="ti" viewBox="0 0 24 24"><path class="st-o" d="M6 2Q1 8 2 14q2 8 10 8t10-8q0-6-4-11 1 4-2 6-1-5-5-7 1 5-2 6-2-2-3-6z"/><path class="st-o" d="M16 10q-7-1-7 5t6 3"/></svg></div>
<div class="task gap"><svg class="ti" viewBox="0 0 24 24"><path class="st-p" d="M2 8h20v15H2zM7 8V4q5-6 10 0v4M7 4h10"/></svg></div>
<div class="task"><svg class="ti" viewBox="0 0 24 24"><path class="vs" d="M17 1l6 3v16l-6 3-10-9-4 3-2-1V8l2-1 4 3zM17 7l-6 5 6 5z"/></svg></div>
<div class="task act"><svg class="ti" viewBox="0 0 20 20"><use href="#mc"/></svg></div>
<div class="task"><svg class="ti" viewBox="0 0 24 24"><path class="st-o" d="M2 2h20v20H2zM2 17l6-7 4 4 4-2 6 2"/><circle class="st-o" cx="16" cy="7" r="1.500"/></svg></div>
<div class="task"><svg class="ti" viewBox="0 0 24 24"><path class="ly1" d="M12 1l10 6-10 6L2 7z"/><path class="ly2" d="M4 10l8 5 8-5 2 2-10 6-10-6z"/><path class="ly3" d="M4 15l8 5 8-5 2 2-10 6-10-6z"/></svg></div>
</div>
<div class="tray">
<svg class="tr t1" viewBox="0 0 26 20"><path class="st-w" d="M4 1h18q3 0 3 3v12q0 3-3 3H4q-3 0-3-3V4q0-3 3-3zM6 14h14"/></svg>
<div class="pager"><div class="pg"></div></div>
<svg class="tr t3" viewBox="0 0 20 24"><path class="sh1" d="M10 1l8 3v9q0 6-8 10-8-4-8-10V4z"/><circle class="sh1" cx="10" cy="11" r="4.500"/><path class="sh1" d="M8 11l2 2 2-3"/></svg>
<svg class="tr t4" viewBox="0 0 20 20"><path class="bl" d="M1 1h7v9H1z"/><path class="wh" d="M5 6h14v12H11l-2 2v-2H5z"/></svg>
<svg class="tr t5" viewBox="0 0 24 24"><path class="st-p" d="M1 8h21v15H1zM6 8V4q5-5 10 0v4M6 5h10"/></svg>
<svg class="tr t6" viewBox="0 0 18 22"><path class="st-w" d="M5 3h8M3 4h-1v17h14V4h-1M5 1h8v4H5z"/></svg>
<svg class="tr t7" viewBox="0 0 20 20"><circle class="st-w" cx="10" cy="10" r="8.500"/><path class="wh" d="M6.500 6h2.500v8H6.500zM11 6h2.500v8H11z"/></svg>
<svg class="tr t8" viewBox="0 0 20 18"><path class="wh" d="M1 6h4l5-5v16l-5-5H1z"/><path class="gr" d="M12 5q2 4 0 8M15 3q3 6 0 12M18 1q4 8 0 16"/></svg>
<svg class="tr t9" viewBox="0 0 16 24"><path class="wh" d="M8 0q7 0 7 6v12q0 6-7 6t-7-6V6q0-6 7-6z"/><path class="bk" d="M3 8l9 8-4 4V4l4 4-9 8"/></svg>
<span class="us">us</span>
<svg class="tr t10" viewBox="0 0 24 18"><path class="wh" d="M12 18L5 8q7-5 14 0z"/><path class="gr2" d="M1 5q11-8 22 0"/></svg>
<svg class="tr t11" viewBox="0 0 14 8"><path class="wh" d="M7 0l7 7H0z"/></svg>
<div class="clock"><span class="ctime">14:53</span><span class="cdate">27.04.2023</span></div>
</div>
</footer>
</div>
<script src="chart.js"></script>
</body>
</html>
```
FILE: styles.css
```css
*{box-sizing:border-box}
html,body{margin:0;padding:0;height:1080px;overflow:hidden;background:#fff}
body{font-family:"Liberation Sans",Arial,sans-serif;font-size:11px;color:#000}
.defs{position:absolute}
.mct{font:bold 9px "Liberation Serif",serif;fill:#c01010;text-anchor:middle}
.mini{font:6px "Liberation Sans",sans-serif;fill:#333}
.fxt{font:italic bold 10px "Liberation Serif",serif;fill:#111}
.zt{font:bold 11px "Liberation Serif",serif;fill:#223;text-anchor:middle}
.zts{font:italic bold 9px "Liberation Serif",serif;fill:#223;text-anchor:middle}
.num{font:7px "Liberation Sans",sans-serif;fill:#111;text-anchor:middle}
.tiny{font:bold 6px "Liberation Sans",sans-serif;fill:#111;text-anchor:middle}
.ab{font:bold 15px "Liberation Serif",serif;fill:#2c4f8c;text-anchor:middle}
.app{display:flex;flex-direction:column;height:1080px}

.titlebar{height:29px;flex:none;display:flex;align-items:center;justify-content:space-between;background:linear-gradient(#3d4149,#2f3336);position:relative;color:#eff0f1}
.tb-left{display:flex;align-items:center;padding-left:8px;gap:9px}
.logo{width:20px;height:20px}
.pin{width:11px;height:11px}
.pinp{fill:#fff}
.tb-title{font:13px "Noto Sans",sans-serif;position:absolute;left:0;right:0;text-align:center;top:5px}
.tb-right{display:flex;align-items:center;gap:10px;padding-right:8px}
.wc{width:14px;height:14px}
.wcl{fill:none;stroke:#eff0f1;stroke-width:1.200}
.closeb{width:20px;height:20px;margin-left:-3px;border-radius:50%;background:#fcfcfc;display:flex;align-items:center;justify-content:center}
.wcx{width:12px;height:12px}
.wcd{stroke:#31363b;stroke-width:1.300;fill:none}

.menubar{height:20px;flex:none;border-bottom:1px solid #aaa;display:flex;align-items:center;background:#fff;padding-left:0}
.micon{width:16px;height:18px;margin-right:6px;flex:none}
.mi1{fill:#fff;stroke:#111}
.mi2{fill:#000090}
.mi3{fill:#fff;stroke:#111}
.mi4{fill:#2aa0a0}
.menus{display:flex;gap:13px;flex:1;font-size:11px;padding-top:1px}
.menus span:nth-child(4){padding-right:1px}
.menus span:nth-child(6){padding-right:4px}
.menus span:nth-child(8){padding-right:3px}
.mdi-btns{display:flex;gap:3px;padding-right:2px}
.mb{width:12px;height:12px;fill:none;stroke:#b8b8b8}

.toolbar{height:32px;flex:none;display:flex;background:#fff;border-bottom:2px solid #aaa;align-items:center}
.grp{display:flex;align-items:center;height:30px;padding:0 3.500px 0 5px;border-right:1px solid #aaa}
.g1{padding-left:4px;padding-right:3px}
.comp{padding-right:27px}
.grip{width:2px;height:24px;margin-right:3.700px;background:repeating-linear-gradient(#333 0 1px,transparent 1px 2px);flex:none}
.b{width:23px;height:23px;flex:none;display:flex;align-items:center;justify-content:center;border:1px solid transparent;border-radius:3px}
.b.on{border-color:#3d8fe8;background:#fff}
.i{width:18px;height:18px;display:block}
.i.c{background:#efefef;width:17px;height:19px}
.sp{width:1px;height:24px;background:#bbb;margin:0 2px;flex:none}
.ch{width:11px;height:23px;flex:none;display:flex;align-items:center;justify-content:center}
.ch::before{content:"";width:5px;height:5px;border-right:1px solid #444;border-bottom:1px solid #444;transform:rotate(45deg) translate(-1px,-1px)}
.ch.lt::before{border-color:#bbb}

.mdi{flex:none;height:832px;padding:6px 3px 0 8px;margin-left:0;border-left:1px solid #c0c0c0;background:#fff;overflow:hidden;position:relative}
.mdi::before{content:"";position:absolute;left:2px;top:0;bottom:0;width:1px;background:#bbb}
.child{display:flex;flex-direction:column;width:1907px;margin-left:-1px;position:relative}
.child-title{height:18px;flex:none;background:#3296fd;display:flex;align-items:center}
.ci{width:16px;height:17px;margin-left:0;flex:none}
.ct{font:12px "Liberation Sans",sans-serif;letter-spacing:.22px;color:#0b2240;margin-left:4.500px;flex:1;padding-top:1px}
.cbtns{display:flex;gap:1px}
.cb{width:15px;height:16px}
.cbg{fill:#f0f0f0}
.cbl{stroke:#000;stroke-width:1.800;fill:none}
.cbt{stroke:#000;stroke-width:1.200;fill:none}
.child-tools{height:30px;flex:none;background:#f3f3f3;display:flex;align-items:center;padding-left:3px}
.s2{width:1px;height:24px;background:#bbb;margin:0 2px;flex:none}
.bigt{font:bold 19px "Liberation Serif",serif;color:#111}
.biga{font:bold 16px "Liberation Serif",serif;color:#2c4f8c}

.plot{display:block;background:#fff;flex:none}
.edge{stroke:#999;fill:none}
.grid{stroke:#808080;fill:none;stroke-dasharray:4 3;shape-rendering:crispEdges}
.frame{stroke:#808080;fill:none;shape-rendering:crispEdges}
.red{stroke:#f00;shape-rendering:crispEdges}
.blue{stroke:#00f;shape-rendering:crispEdges}
.curve{stroke:#00f;fill:none;stroke-width:1;shape-rendering:crispEdges}
.tick-y text{font:11px "Liberation Sans",sans-serif;fill:#3030ff;text-anchor:end}
.tick-x text{font:11px "Liberation Sans",sans-serif;fill:#3030ff;text-anchor:middle}
.tick-t{font:11px "Liberation Sans",sans-serif;fill:#3030ff;text-anchor:middle}
.leg-b{font:11px "Liberation Sans",sans-serif;fill:#3030ff}
.leg-r{font:11px "Liberation Sans",sans-serif;fill:#ff3030}
.lgu{stroke:#00f;shape-rendering:crispEdges}
.tags path{stroke:#000090;fill:none;shape-rendering:crispEdges}
.tags path.mk{fill:#fff;stroke:#303090}
.tagt text{font:16.400px "Liberation Sans",sans-serif;fill:#0000f0;stroke:#0000f0;stroke-width:.25px}

.tabs{height:29px;flex:none;background:#f3f3f3;border-top:1px solid #aaa;border-bottom:1px solid #aaa;display:flex;align-items:flex-start;padding-left:5px;font-size:11px}
.tab{display:flex;align-items:center;justify-content:center;height:18px;width:85px;margin-top:1px;border-bottom:2px solid #666;padding-top:5px}
.tab.act{width:131px;height:22px;margin:-1px 0 0 2px;background:#f6f6f6;border:1px solid #bbb;border-right:2px solid #555;border-bottom:2px solid #666;padding:1px 7px 2px 0}
.output{height:72px;flex:none;background:#f3f3f3;display:flex;padding:4px 0 3px 0;border-bottom:1px solid #aaa}
.ohandle{width:15px;flex:none;display:flex;flex-direction:column;align-items:center}
.ox{font:bold 11px "Liberation Sans",sans-serif;line-height:12px;margin-left:-7px}
.obar{width:4px;flex:1;margin:2px 0 0 -7px;border:1px solid #bbb;border-width:0 1px}
.obox{flex:1;background:#fff}
.status{height:22px;flex:none;background:#f3f3f3;display:flex;align-items:stretch;border-top:1px solid #c8c8c8;padding-top:1px;font-size:14.600px;color:#111;line-height:19px}
.st1{width:175px;padding:2px 0 0 3px;border-right:1px solid #aaa;margin-bottom:1px}
.st2{width:1426px;padding:0 0 0 5px;border-right:1px solid #aaa;margin-bottom:1px}
.st3{width:215px;border-right:1px solid #aaa;margin-bottom:1px}
.st4{flex:1}

.taskbar{height:44px;flex:none;background:linear-gradient(90deg,#2f3334,#383b35);display:flex;align-items:center;position:relative}
.start{width:32px;height:32px;margin:2px 0 0 7px;flex:none;fill:#fff}
.tasks{display:flex;margin-left:4.500px;height:44px;align-items:stretch}
.task{width:60px;display:flex;align-items:center;justify-content:center;position:relative;padding-bottom:2px}
.task::after{content:"";position:absolute;left:2px;right:2px;bottom:3px;height:4px;border-radius:2px;background:#767676}
.task.gap::after{display:none}
.task:nth-child(5)::after{display:none}
.task.act::after{background:#3daee9}
.ti{width:24px;height:24px}
.st-o{fill:none;stroke:#f0640c;stroke-width:1.700}
.st-b{fill:none;stroke:#2f80ed;stroke-width:1.700}
.st-p{fill:none;stroke:#b45ef0;stroke-width:1.700}
.st-w{fill:none;stroke:#fff;stroke-width:1.700}
.vs{fill:#0a7fcf}
.ly1{fill:#2f9fe0}
.ly2{fill:#6ab03a}
.ly3{fill:#f0642c}
.tray{margin-left:auto;display:flex;align-items:center;height:44px;position:relative;width:465px}
.tr{position:absolute}
.t1{left:-3px;top:12px;width:26px;height:20px}
.pager{position:absolute;left:37px;top:4px;width:30px;height:16px;background:#fff}
.pg{height:16px;background:#a9d9f1;border-radius:4px}
.t3{left:79px;top:11px;width:20px;height:24px}
.sh1{fill:none;stroke:#e0556a;stroke-width:1.400}
.t4{left:110px;top:13px;width:19px;height:19px}
.bl{fill:#3a9fe0}
.wh{fill:#fff}
.t5{left:138px;top:11px;width:23px;height:23px}
.t6{left:170px;top:13px;width:15px;height:19px}
.t7{left:199px;top:13px;width:19px;height:19px}
.t8{left:228px;top:14px;width:20px;height:17px}
.gr{fill:none;stroke:#999;stroke-width:1.200}
.t9{left:259px;top:11px;width:15px;height:23px}
.bk{fill:none;stroke:#31363b;stroke-width:1.200}
.us{position:absolute;left:285px;top:8px;font:20px "Noto Sans",sans-serif;color:#cfe3f0}
.t10{left:317px;top:14px;width:22px;height:16px}
.gr2{fill:none;stroke:#999;stroke-width:2.500}
.t11{left:349px;top:17px;width:12px;height:7px}
.clock{position:absolute;right:8px;top:0;width:84px;display:flex;flex-direction:column;align-items:center;color:#cfe3f0;font-family:"Noto Sans",sans-serif}
.ctime{font-size:19.500px;line-height:22px;margin-top:5px}
.cdate{font-size:15.500px;line-height:15px;margin-top:-1px}
```
FILE: chart.js
```js
// Family of six damped responses (R1 = 90K...240K), drawn from their measured extrema.
var T = [.0214, .073, .125, .175, .225, .276, .326, .378, .429];
var EXT = [
  [.857, 1.160, .904, 1.068, .946, 1.043, .967, 1.025, .981],
  [.841, 1.151, .904, 1.067, .949, 1.040, .969, 1.024, .983],
  [.8206, 1.141, .905, 1.066, .953, 1.037, .973, 1.022, .985],
  [.7939, 1.132, .906, 1.062, .958, 1.032, .978, 1.018, .990],
  [.7561, 1.121, .909, 1.056, .966, 1.023, .986, 1.011, .994],
  [.7015, 1.113, .916, 1.044, .977, 1.012, .993, 1.004, .998]
];
var RISE = [.9, .88, .85, .8, .72, .6];
var DECAY = [.8, .8, .78, .74, .66, .55];

function value(i, t) {
  var e = EXT[i];
  if (t < T[0]) {
    var s = 1 - t / T[0];
    return e[0] + (.965 - e[0]) * s * s;
  }
  var last = T.length - 1;
  if (t >= T[last]) {
    var n = (t - T[last]) / .051;
    var k = Math.floor(n);
    var d0 = (e[last] - 1) * Math.pow(-DECAY[i], k);
    var d1 = d0 * -DECAY[i];
    var f = (1 - Math.cos(Math.PI * (n - k))) / 2;
    return 1 + d0 + (d1 - d0) * f;
  }
  for (var j = 0; j < last; j++) {
    if (t < T[j + 1]) {
      var u = (t - T[j]) / (T[j + 1] - T[j]);
      if (j === 0) u = Math.pow(u, RISE[i]);
      return e[j] + (e[j + 1] - e[j]) * (1 - Math.cos(Math.PI * u)) / 2;
    }
  }
}

var group = document.getElementById('curves');
for (var i = 0; i < EXT.length; i++) {
  var pts = [];
  for (var x = 48; x <= 1897; x++) {
    var v = value(i, (x - 46.6) / 1850);
    pts.push(x + ',' + (Math.round(867 - v * 476.7) + .5));
  }
  var line = document.createElementNS('http://www.w3.org/2000/svg', 'polyline');
  line.setAttribute('class', 'curve');
  line.setAttribute('points', pts.join(' '));
  group.appendChild(line);
}
```
